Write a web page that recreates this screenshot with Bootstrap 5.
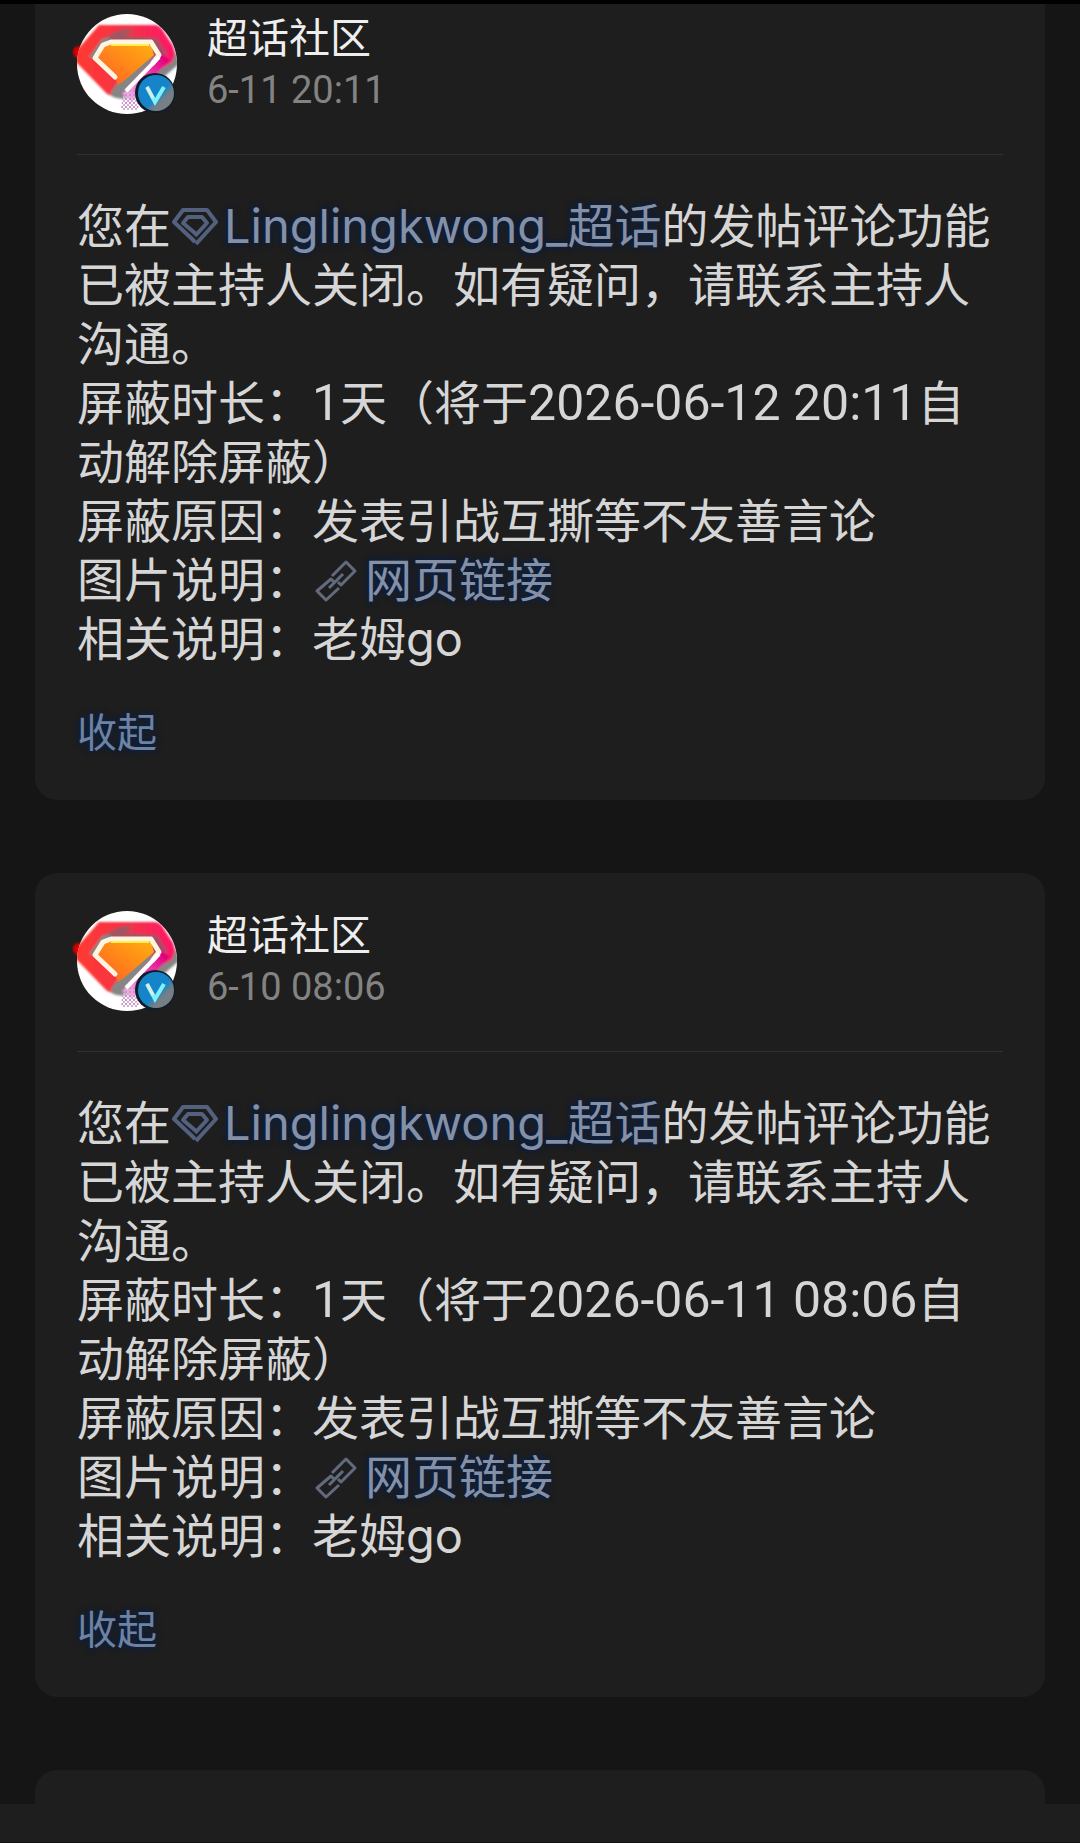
<!DOCTYPE html>
<html lang="zh-CN">
<head>
<meta charset="utf-8">
<meta name="viewport" content="width=device-width, initial-scale=1">
<title>超话社区</title>
<link href="https://cdn.jsdelivr.net/npm/bootstrap@5.3.0/dist/css/bootstrap.min.css" rel="stylesheet">
<style>
body{background:#151515;color:#d6d6d6;font-family:Inter,"Noto Sans CJK SC",sans-serif}
.feed{gap:73px;padding:0 35px}
.topline{height:4px;background:#000}
.notice{background:#1e1e1e;border:0;border-radius:22px;color:inherit;padding:36px 42px 39px}
.notice-cut{border-top-left-radius:0;border-top-right-radius:0;padding-top:8px}
.notice-next{border-bottom-left-radius:0;border-bottom-right-radius:0;padding:0}
.who{gap:30px}
.avatar{width:100px;height:100px;overflow:visible}
.sender{font-size:41px;line-height:52px;color:#eee;font-weight:400}
.when,.num{font-family:Roboto,"Noto Sans CJK SC",sans-serif}
.when{font-size:38px;line-height:52px;color:#838383}
.num{font-size:50px;line-height:50px}
.rule{height:1px;background:#303030;margin:38px 0 41px}
.msg{font-size:47px;line-height:59px}
.tint,.fold{color:#8690a5;text-decoration:none;text-shadow:0 0 4px #07204a,0 0 7px #07204a}
.ico{width:47px;height:47px;vertical-align:-7px;margin-right:6px}
.fold{font-size:40px;line-height:56px;margin-top:37px;color:#70829f;background:none;border:0;padding:0}
.dock{height:39px;background:#1e1e1e;border-bottom:1px solid #121212}
</style>
<script src="https://cdn.jsdelivr.net/npm/bootstrap@5.3.0/dist/js/bootstrap.bundle.min.js"></script>
</head>
<body>
<svg width="0" height="0" class="position-absolute" aria-hidden="true">
<defs>
<linearGradient id="gRed" x1="0" y1="0" x2="1" y2="0"><stop offset="0" stop-color="#ff3a30"/><stop offset=".6" stop-color="#f5304c"/><stop offset="1" stop-color="#ff1668"/></linearGradient>
<linearGradient id="gOr" x1="0" y1="1" x2="1" y2="0"><stop offset="0" stop-color="#ff5a2a"/><stop offset=".55" stop-color="#ff8a18"/><stop offset="1" stop-color="#ffae10"/></linearGradient>
<linearGradient id="gV" x1="0" y1="0" x2="1" y2="1"><stop offset=".55" stop-color="#1684c8"/><stop offset=".7" stop-color="#777f86"/></linearGradient>
<linearGradient id="gTail" gradientUnits="userSpaceOnUse" x1="88" y1="45" x2="46" y2="90"><stop offset="0" stop-color="#e0007c"/><stop offset=".45" stop-color="#f04cc0"/><stop offset="1" stop-color="#fbd0f4"/></linearGradient>
<pattern id="dots" width="4" height="4" patternUnits="userSpaceOnUse"><rect width="2" height="2" fill="#d98ad6"/><rect x="2" y="2" width="2" height="2" fill="#c9b5c9"/></pattern>
<filter id="soft"><feGaussianBlur stdDeviation="1"/></filter>
<clipPath id="disc"><circle cx="50" cy="50" r="50"/></clipPath>
<symbol id="face" viewBox="0 0 100 100" overflow="visible">
<circle cx="2" cy="38" r="6" fill="#d80000" filter="url(#soft)"/>
<circle cx="50" cy="50" r="50" fill="#fff"/>
<g clip-path="url(#disc)"><g filter="url(#soft)">
<path d="M80 16 98 38 104 48 88 62 76 70 50 84Q42 86 34 82L60 44Z" fill="#858585"/>
<path d="M22 11H77Q82 11 85 15L96 32Q100 42 94 49L82 56 52 70 38 80Q33 83 29 79L0 49Q-6 42 0 36Z" fill="url(#gRed)"/>
<path d="M26 25 40 17Q50 13 56 17L48 22 80 24 90 40 86 50 76 40 30 28 14 44Z" fill="#86606a" opacity=".75"/>
<path d="M12 43 25 25 34 23 28 33 18 45Z" fill="#868686"/>
<path d="M42 66 62 46 80 42 74 58 42 83 33 80Z" fill="#858585"/>
<path d="M88 42 50 84" stroke="url(#gTail)" stroke-width="12"/>
</g>
<path d="M46 80 58 74 62 96H44Z" fill="url(#dots)"/></g>
<path d="M38 63 19 44 27 31H74L77 41 48 66 41 71Z" fill="url(#gOr)"/>
<path d="M38 63 18 44 26 31 34 28H74L82 41 76 49" fill="none" stroke="#fff4df" stroke-width="5" stroke-linejoin="round" stroke-linecap="round"/>
<path d="M34 31H72" stroke="#fff04a" stroke-width="2"/>
<path d="M82 43 49 77" stroke="#fff" stroke-width="4"/>
<circle cx="78" cy="79" r="20" fill="#101c28"/><circle cx="79" cy="79" r="18" fill="url(#gV)"/>
<path d="M70 73 78 88 87 73" fill="none" stroke="#7af3ff" stroke-width="4"/><path d="M70 73 76 84" stroke="#e0ece0" stroke-width="3"/>
</symbol>
<symbol id="gem" viewBox="0 0 47 47"><g fill="none" stroke="#53617e" stroke-width="4" stroke-linejoin="round"><path d="M24 39 20 35 3 19 12 7H36L45 19 25 41"/><path d="M25 31 12 20 17 14H31L36 20 24 33"/></g></symbol>
<symbol id="chain" viewBox="0 0 47 47"><g fill="none" stroke="#626b7d" stroke-width="3" stroke-linejoin="round"><path d="M20 19 34 5 43 14 29 28 26 25"/><path d="M22 25 19 22 5 34 14 43 27 31"/><path d="M17 31 31 17"/></g></symbol>
</defs>
</svg>
<main class="d-flex flex-column min-vh-100">
<div class="topline"></div>
<div class="feed d-flex flex-column flex-grow-1">
<article class="card notice notice-cut">
<header class="who d-flex align-items-center"><svg class="avatar flex-shrink-0" role="img" aria-label="超话社区"><use href="#face"/></svg>
<div><h2 class="sender m-0">超话社区</h2><time class="when d-block">6-11 20:11</time></div></header>
<div class="rule"></div>
<div class="msg">
<div>您在<a href="#" class="tint"><svg class="ico" aria-hidden="true"><use href="#gem"/></svg>Linglingkwong_超话</a>的发帖评论功能已被主持人关闭。如有疑问，请联系主持人沟通。</div>
<div>屏蔽时长：<span class="num">1</span>天（将于<time class="num">2026-06-12 20:11</time>自动解除屏蔽）</div>
<div>屏蔽原因：发表引战互撕等不友善言论</div>
<div>图片说明：<a href="#" class="tint"><svg class="ico" aria-hidden="true"><use href="#chain"/></svg>网页链接</a></div>
<div>相关说明：老姆go</div>
</div>
<button type="button" class="fold align-self-start">收起</button>
</article>
<article class="card notice">
<header class="who d-flex align-items-center"><svg class="avatar flex-shrink-0" role="img" aria-label="超话社区"><use href="#face"/></svg>
<div><h2 class="sender m-0">超话社区</h2><time class="when d-block">6-10 08:06</time></div></header>
<div class="rule"></div>
<div class="msg">
<div>您在<a href="#" class="tint"><svg class="ico" aria-hidden="true"><use href="#gem"/></svg>Linglingkwong_超话</a>的发帖评论功能已被主持人关闭。如有疑问，请联系主持人沟通。</div>
<div>屏蔽时长：<span class="num">1</span>天（将于<time class="num">2026-06-11 08:06</time>自动解除屏蔽）</div>
<div>屏蔽原因：发表引战互撕等不友善言论</div>
<div>图片说明：<a href="#" class="tint"><svg class="ico" aria-hidden="true"><use href="#chain"/></svg>网页链接</a></div>
<div>相关说明：老姆go</div>
</div>
<button type="button" class="fold align-self-start">收起</button>
</article>
<article class="card notice notice-next flex-grow-1"></article>
</div>
<footer class="dock"></footer>
</main>
</body>
</html>
